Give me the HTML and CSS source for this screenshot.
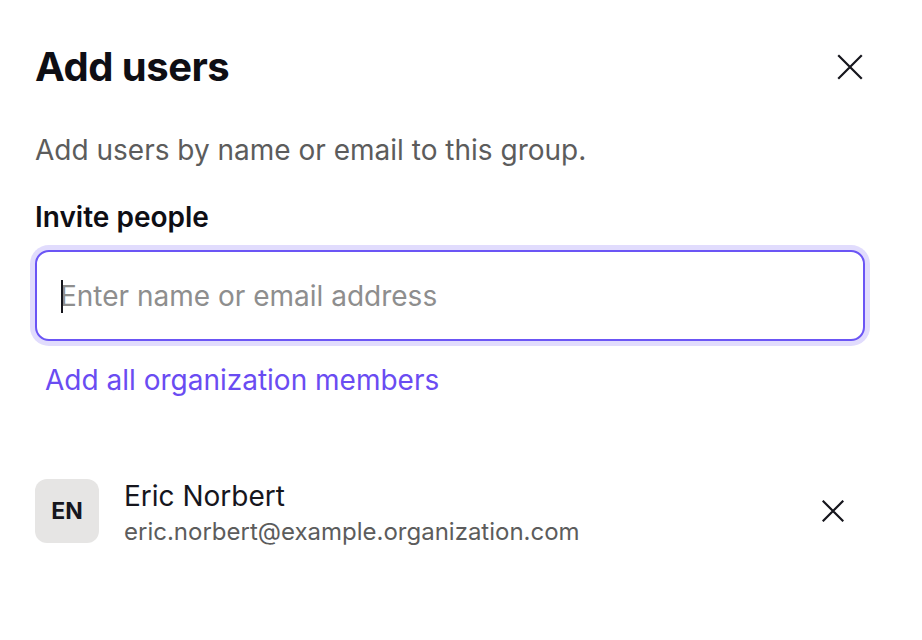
FILE: index.html
```html
<!DOCTYPE html>
<html lang="en">
<head>
<meta charset="utf-8">
<title>Add users</title>
<link rel="stylesheet" href="styles.css">
</head>
<body>
<div class="dialog">
  <header class="dialog-header">
    <h1 class="title">Add users</h1>
    <button class="close-btn" aria-label="Close">
      <svg width="26" height="26" viewBox="0 0 26 26" fill="none" stroke="#16161d" stroke-width="2.2" stroke-linecap="square"><path d="M2 2 L24 24 M24 2 L2 24"/></svg>
    </button>
  </header>
  <p class="subtitle">Add users by name or email to this group.</p>
  <label class="field-label" for="invite">Invite people</label>
  <div class="input-wrap">
    <span class="caret"></span>
    <input id="invite" class="input" type="text" placeholder="Enter name or email address">
  </div>
  <a class="link" href="#">Add all organization members</a>
  <ul class="users">
    <li class="user">
      <div class="avatar">EN</div>
      <div class="user-info">
        <div class="user-name">Eric Norbert</div>
        <div class="user-email">eric.norbert@example.organization.com</div>
      </div>
      <button class="remove-btn" aria-label="Remove">
        <svg width="22" height="22" viewBox="0 0 22 22" fill="none" stroke="#16161d" stroke-width="2.2" stroke-linecap="square"><path d="M1.5 1.5 L20.5 20.5 M20.5 1.5 L1.5 20.5"/></svg>
      </button>
    </li>
  </ul>
</div>
</body>
</html>
```
FILE: styles.css
```css
* { box-sizing: border-box; }
html, body { margin: 0; padding: 0; background: #ffffff; }
body { font-family: Inter, "Noto Sans", sans-serif; color: #16161d; }
.dialog { width: 900px; padding: 0 35px; }
.dialog-header { display: flex; justify-content: space-between; align-items: center; padding-top: 45px; }
.title { margin: 0; font-size: 40px; line-height: 44px; font-weight: 700; letter-spacing: -0.5px; color: #0e0e14; }
.close-btn { width: 30px; height: 30px; padding: 0; border: 0; background: none; display: flex; align-items: center; justify-content: center; cursor: pointer; }
.subtitle { margin: 43px 0 0; font-size: 28px; line-height: 36px; color: #5c5c5c; }
.field-label { display: block; margin-top: 31px; font-size: 28px; line-height: 36px; font-weight: 600; color: #0e0e14; }
.input-wrap { position: relative; margin-top: 15px; }
.input { width: 100%; height: 91px; border: 2px solid #6b55f5; border-radius: 14px; box-shadow: 0 0 0 5px #e1dcfd; padding: 0 23px; font-family: inherit; font-size: 28px; color: #16161d; outline: none; background: #fff; }
.input::placeholder { color: #8e8e8e; }
.caret { position: absolute; left: 26px; top: 30px; width: 2px; height: 33px; background: #16161d; }
.link { display: inline-block; margin: 21px 0 0 10px; font-size: 28px; line-height: 36px; color: #6a4cf2; text-decoration: none; }
.users { list-style: none; margin: 77px 0 0; padding: 0; }
.user { display: flex; align-items: center; }
.avatar { width: 64px; height: 64px; border-radius: 12px; background: #e6e5e4; display: flex; align-items: center; justify-content: center; font-size: 23px; font-weight: 700; color: #16161d; }
.user-info { flex: 1; margin: 3px 0 -3px 25px; }
.user-name { font-size: 28px; line-height: 36px; color: #16161d; }
.user-email { font-size: 24px; line-height: 36px; color: #5c5c5c; }
.remove-btn { width: 30px; height: 30px; margin-right: 17px; padding: 0; border: 0; background: none; display: flex; align-items: center; justify-content: center; cursor: pointer; }
```
